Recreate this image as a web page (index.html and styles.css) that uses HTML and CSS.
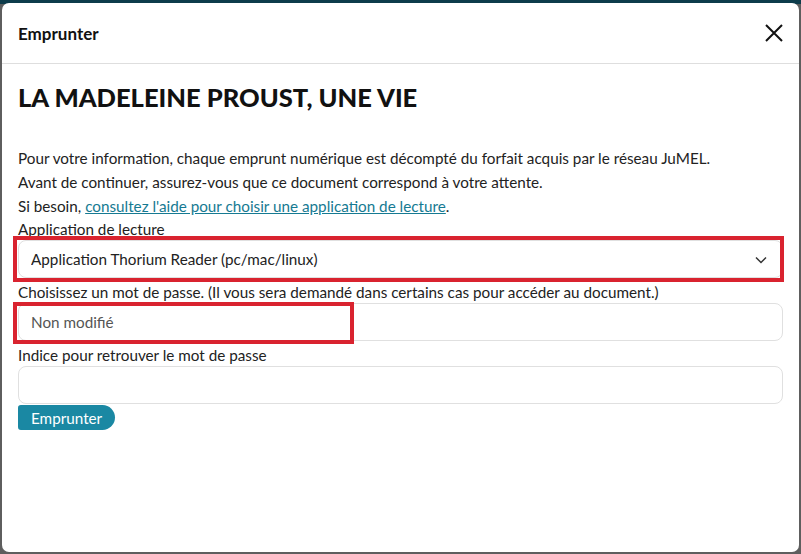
FILE: index.html
```html
<!DOCTYPE html>
<html lang="fr">
<head>
    <meta charset="UTF-8">
    <meta name="viewport" content="width=device-width, initial-scale=1.0">
    <title>Emprunter</title>
    <link rel="stylesheet" href="styles.css">
</head>
<body>
    <div class="modal">
        <div class="modal-header">
            <h5 class="modal-title">Emprunter</h5>
            <button type="button" class="close-button" aria-label="Fermer">
                <svg width="18" height="18" viewBox="0 0 18 18">
                    <path d="M1 1 L17 17 M17 1 L1 17" stroke="#111" stroke-width="2" fill="none"/>
                </svg>
            </button>
        </div>
        <div class="modal-body">
            <h2 class="doc-title">LA MADELEINE PROUST, UNE VIE</h2>
            <p class="info">
                Pour votre information, chaque emprunt numérique est décompté du forfait acquis par le réseau JuMEL.<br>
                Avant de continuer, assurez-vous que ce document correspond à votre attente.<br>
                Si besoin, <a href="#">consultez l'aide pour choisir une application de lecture</a>.
            </p>
            <form class="loan-form">
                <label for="app">Application de lecture</label>
                <div class="field highlight">
                    <select id="app" class="form-control">
                        <option>Application Thorium Reader (pc/mac/linux)</option>
                    </select>
                    <svg class="chevron" width="12" height="8" viewBox="0 0 12 8">
                        <path d="M1 1.5 L6 6.5 L11 1.5" stroke="#333" stroke-width="1.5" fill="none"/>
                    </svg>
                </div>
                <label for="pass">Choisissez un mot de passe. (Il vous sera demandé dans certains cas pour accéder au document.)</label>
                <div class="field">
                    <input type="text" id="pass" class="form-control" placeholder="Non modifié">
                    <span class="highlight-box"></span>
                </div>
                <label for="hint">Indice pour retrouver le mot de passe</label>
                <div class="field">
                    <input type="text" id="hint" class="form-control">
                </div>
                <button type="submit" class="loan-button">Emprunter</button>
            </form>
        </div>
    </div>
</body>
</html>
```

FILE: styles.css
```css
body {
    margin: 0;
    height: 554px;
    font-family: Lato, "Liberation Sans", sans-serif;
    color: #222;
    background: linear-gradient(#0d3c4b 0, #0d3c4b 4px, #5e5e5e 4px);
    overflow: hidden;
}

.modal {
    margin: 3px 2px 0;
    height: 549px;
    background-color: #fff;
    border-radius: 7px;
}

.modal-header {
    display: flex;
    justify-content: space-between;
    align-items: center;
    height: 60px;
    padding: 0 16px 0 16px;
    border-bottom: 1px solid #dedede;
}

.modal-title {
    margin: 0;
    font-size: 17px;
    font-weight: bold;
    color: #111;
}

.close-button {
    display: flex;
    background: none;
    border: none;
    padding: 0;
    cursor: pointer;
}

.modal-body {
    padding: 17px 16px 0 16px;
}

.doc-title {
    margin: 0 0 33px;
    font-size: 25.5px;
    font-weight: 900;
    color: #111;
    line-height: 32px;
}

.info {
    margin: 0;
    font-size: 15.25px;
    line-height: 24px;
}

.info a {
    color: #167a92;
}

.loan-form label {
    display: block;
    font-size: 15.25px;
    line-height: 22px;
}

.field {
    position: relative;
    margin-bottom: 3px;
}

.loan-form .field:last-of-type {
    margin-bottom: 1px;
}

.form-control {
    display: block;
    box-sizing: border-box;
    width: 100%;
    height: 38px;
    padding: 0 12px;
    border: 1px solid #e0e0e0;
    border-radius: 8px;
    background: #fff;
    font-family: inherit;
    font-size: 15.25px;
    color: #222;
}

.form-control::placeholder {
    color: #555;
}

select.form-control {
    appearance: none;
}

.chevron {
    position: absolute;
    right: 16px;
    top: 16px;
}

.highlight::after,
.highlight-box {
    content: "";
    position: absolute;
    top: -4px;
    left: -5px;
    right: -1px;
    bottom: -4px;
    border: 4px solid #d9232f;
    pointer-events: none;
}

.highlight-box {
    top: -1px;
    right: auto;
    bottom: -3px;
    width: 341px;
    box-sizing: border-box;
}

.loan-button {
    display: block;
    height: 25px;
    padding: 0 13px;
    background-color: #1a88a3;
    color: #fff;
    border: none;
    border-radius: 3px 13px 13px 3px;
    font-family: inherit;
    font-size: 15.25px;
    cursor: pointer;
}
```
